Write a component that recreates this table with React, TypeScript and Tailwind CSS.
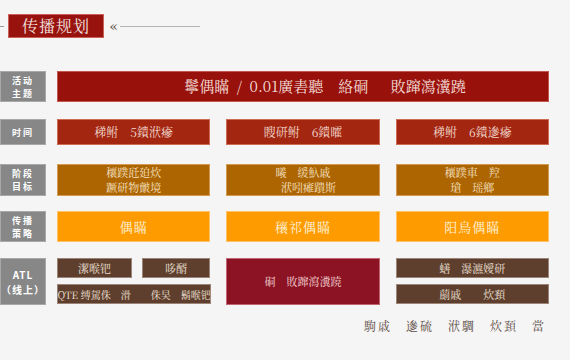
import React from "react";

const serif = {
  fontFamily:
    '"Noto Serif CJK SC", "Liberation Serif", "Noto Sans CJK SC", serif',
};

function Label({ children, h }: { children: React.ReactNode; h: string }) {
  return (
    <div
      className={`w-[46px] ${h} shrink-0 bg-[#878787] border border-[#a8a8a8] flex flex-col items-center justify-center text-white text-[9px] leading-[13px] font-semibold tracking-[2px]`}
      style={{ fontFamily: '"Noto Sans CJK SC", sans-serif' }}
    >
      {children}
    </div>
  );
}

export default function App() {
  return (
    <div
      className="w-[570px] h-[360px] bg-[#f5f5f5] relative overflow-hidden"
      style={serif}
    >
      {/* Title bar */}
      <div className="flex items-center pt-[14px] h-[38px]">
        <div className="w-[4px] h-px bg-[#9a9a9a]" />
        <div className="ml-[4px] w-[96px] h-[24px] bg-[#98130e] border border-[#c9605a] flex items-center justify-center text-[#f3e3e0] text-[16px] tracking-[1px]">
          传播规划
        </div>
        <div className="ml-[6px] text-[#6b5b55] text-[13px] font-bold leading-none -mt-[2px]">
          «
        </div>
        <div className="ml-[2px] w-[80px] h-px bg-[#b5b5b5]" />
      </div>

      {/* Row 1 */}
      <div className="flex mt-[33px] h-[31px]">
        <Label h="h-[31px]">
          <span>活动</span>
          <span>主题</span>
        </Label>
        <div className="ml-[11px] w-[492px] h-[31px] bg-[#99110b] border border-[#c3554f] flex items-center justify-center pl-[44px] text-[#f2dcd6] text-[15px] whitespace-pre">
          {"鬡偶瞞\u2002/\u20020.01廣砉聽\u3000絡硐\u3000\u2002敗蹿瀉瀵蹺"}
        </div>
      </div>

      {/* Row 2 */}
      <div className="flex mt-[17px] h-[26px]">
        <Label h="h-[26px]">
          <span>时间</span>
        </Label>
        <div className="ml-[11px] grid grid-cols-3 gap-x-[16px] w-[492px]">
          {["稊鲋　5鐀洑瘮", "瞍研鲋　6鐀曤", "稊鲋　6鐀遪瘮"].map((t) => (
            <div
              key={t}
              className="h-[26px] bg-[#a22610] border border-[#cf6a55] flex items-center justify-center text-[#f2d9cf] text-[12px] whitespace-pre"
            >
              {t}
            </div>
          ))}
        </div>
      </div>

      {/* Row 3 */}
      <div className="flex mt-[19px] h-[32px]">
        <Label h="h-[32px]">
          <span>阶段</span>
          <span>目标</span>
        </Label>
        <div className="ml-[11px] grid grid-cols-3 gap-x-[16px] w-[492px]">
          {[
            ["穰蹼瓩廹炊", "蹶研物皾境"],
            ["曦　缓魞戚", "　洑吲瘫蹪斯"],
            ["穰蹼車　羫", "瑲　瑶鄉"],
          ].map((t) => (
            <div
              key={t[0]}
              className="h-[32px] bg-[#ac6500] border border-[#d39a55] flex flex-col items-center justify-center text-[#f6e2c8] text-[11px] leading-[15px] whitespace-pre"
            >
              <span>{t[0]}</span>
              <span>{t[1]}</span>
            </div>
          ))}
        </div>
      </div>

      {/* Row 4 */}
      <div className="flex mt-[15px] h-[31px]">
        <Label h="h-[31px]">
          <span>传播</span>
          <span>策略</span>
        </Label>
        <div className="ml-[11px] grid grid-cols-3 gap-x-[16px] w-[492px]">
          {["偶瞞", "穰祁偶瞞", "阳鳥偶瞞"].map((t) => (
            <div
              key={t}
              className="h-[31px] bg-[#fe9b00] border border-[#ffc266] flex items-center justify-center text-[#fff1dc] text-[13px] tracking-[1px]"
            >
              {t}
            </div>
          ))}
        </div>
      </div>

      {/* Row 5 */}
      <div className="flex mt-[16px] h-[47px]">
        <Label h="h-[47px]">
          <span className="text-[10px] leading-[15px] tracking-[1px]">ATL</span>
          <span className="text-[10px] leading-[15px] tracking-[1px]">（线上）</span>
        </Label>
        <div className="ml-[11px] grid grid-cols-3 gap-x-[16px] w-[492px]">
          <div className="flex flex-col gap-[6px]">
            <div className="flex gap-[10px]">
              <div className="w-[75px] h-[20px] bg-[#5e3f2e] border border-[#9a8478] flex items-center justify-center text-[#efe1d8] text-[11px]">
                潔喉钯
              </div>
              <div className="w-[68px] h-[20px] bg-[#5e3f2e] border border-[#9a8478] flex items-center justify-center text-[#efe1d8] text-[11px]">
                哆醑
              </div>
            </div>
            <div className="w-[154px] h-[20px] bg-[#5e3f2e] border border-[#9a8478] flex items-center justify-center text-[#efe1d8] text-[10px] whitespace-pre">
              QTE 缚駕侏　滑　　侏旲　鬍喉钯
            </div>
          </div>
          <div className="h-[47px] bg-[#8c1323] border border-[#c26572] flex items-center justify-center text-[#f2d2d4] text-[11px] whitespace-pre">
            硐　敗蹿瀉瀵蹺
          </div>
          <div className="flex flex-col gap-[6px]">
            <div className="h-[20px] bg-[#5e3f2e] border border-[#9a8478] flex items-center justify-center text-[#efe1d8] text-[11px] whitespace-pre">
              蟮　瀑瀌嬡研
            </div>
            <div className="h-[20px] bg-[#5e3f2e] border border-[#9a8478] flex items-center justify-center text-[#efe1d8] text-[11px] whitespace-pre">
              蘮戚　　炊頚
            </div>
          </div>
        </div>
      </div>

      {/* Footer */}
      <div className="flex justify-end pr-[24px] mt-[12px]">
        <div className="text-[#5a4a44] text-[12px] tracking-[2px] whitespace-pre">
          駒戚　遪硫　洑騆　炊頚　當
        </div>
      </div>
    </div>
  );
}
